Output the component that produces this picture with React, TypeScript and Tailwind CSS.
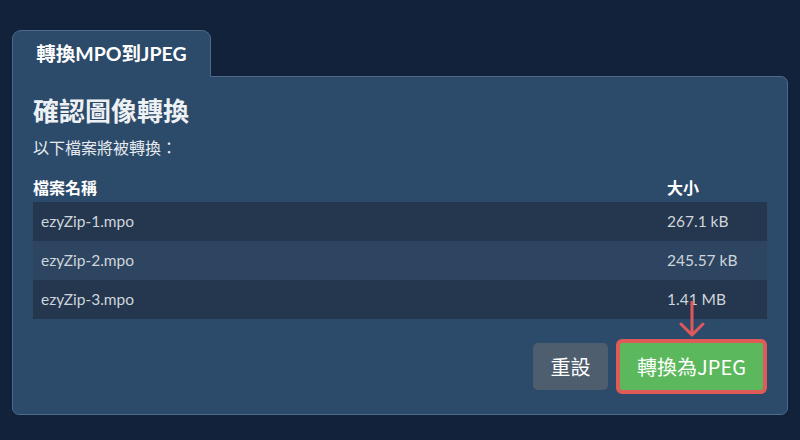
const files = [
  { name: "ezyZip-1.mpo", size: "267.1 kB" },
  { name: "ezyZip-2.mpo", size: "245.57 kB" },
  { name: "ezyZip-3.mpo", size: "1.41 MB" },
];

const font = { fontFamily: '"Lato", "Noto Sans CJK TC", sans-serif' };

export default function App() {
  return (
    <div className="w-[800px] h-[440px] bg-[#11223a] pt-[30px] px-[12px]" style={font}>
      <div className="relative z-10 -mb-px inline-flex h-[47px] w-[199px] items-center justify-center rounded-t-[9px] border border-b-0 border-[#4d6a8b] bg-[#2c4a6a] text-[19.5px] font-bold text-white">
        轉換MPO到JPEG
      </div>
      <div className="h-[339px] rounded-b-[7px] rounded-tr-[7px] border border-[#4d6a8b] bg-[#2c4a6a] px-[20px] pt-[19px]">
        <h1 className="text-[26px] font-bold leading-[31px] text-[#eef1f4]">確認圖像轉換</h1>
        <p className="mt-[10px] text-[16px] leading-[22px] text-[#e6eaef]">以下檔案將被轉換：</p>
        <table className="mt-[18px] w-full border-collapse text-[15.5px]">
          <thead>
            <tr className="text-left text-white">
              <th className="pb-[3px] pl-0 text-[16px] font-bold leading-[22px]">檔案名稱</th>
              <th className="w-[108px] px-[8px] pb-[3px] text-[16px] font-bold leading-[22px]">大小</th>
            </tr>
          </thead>
          <tbody className="text-[#cfd5dc]">
            {files.map((f, i) => (
              <tr key={f.name} className={i % 2 === 1 ? "bg-[#2d4560]" : "bg-[#24374e]"}>
                <td className="h-[39px] px-[8px]">{f.name}</td>
                <td className="h-[39px] px-[8px]">{f.size}</td>
              </tr>
            ))}
          </tbody>
        </table>
        <div className="mt-[20px] flex items-center justify-end gap-[8px]" style={{ fontFamily: '"Noto Sans CJK TC", "Noto Sans", sans-serif' }}>
          <button className="h-[47px] w-[75px] rounded-[5px] bg-[#4e5e6f] text-[20px] text-white">重設</button>
          <div className="relative">
            <svg className="absolute left-1/2 top-[-38px] -translate-x-1/2" width="30" height="37" viewBox="0 0 30 37" fill="none">
              <path d="M15 1 V34 M4 23 L15 34 L26 23" stroke="#e0585a" strokeWidth="3" strokeLinecap="round" strokeLinejoin="round" />
            </svg>
            <button className="h-[55px] w-[151px] rounded-[6px] border-[4px] border-[#de5b57] bg-[#5cb85c] text-[20px] text-white">
              轉換為JPEG
            </button>
          </div>
        </div>
      </div>
    </div>
  );
}
